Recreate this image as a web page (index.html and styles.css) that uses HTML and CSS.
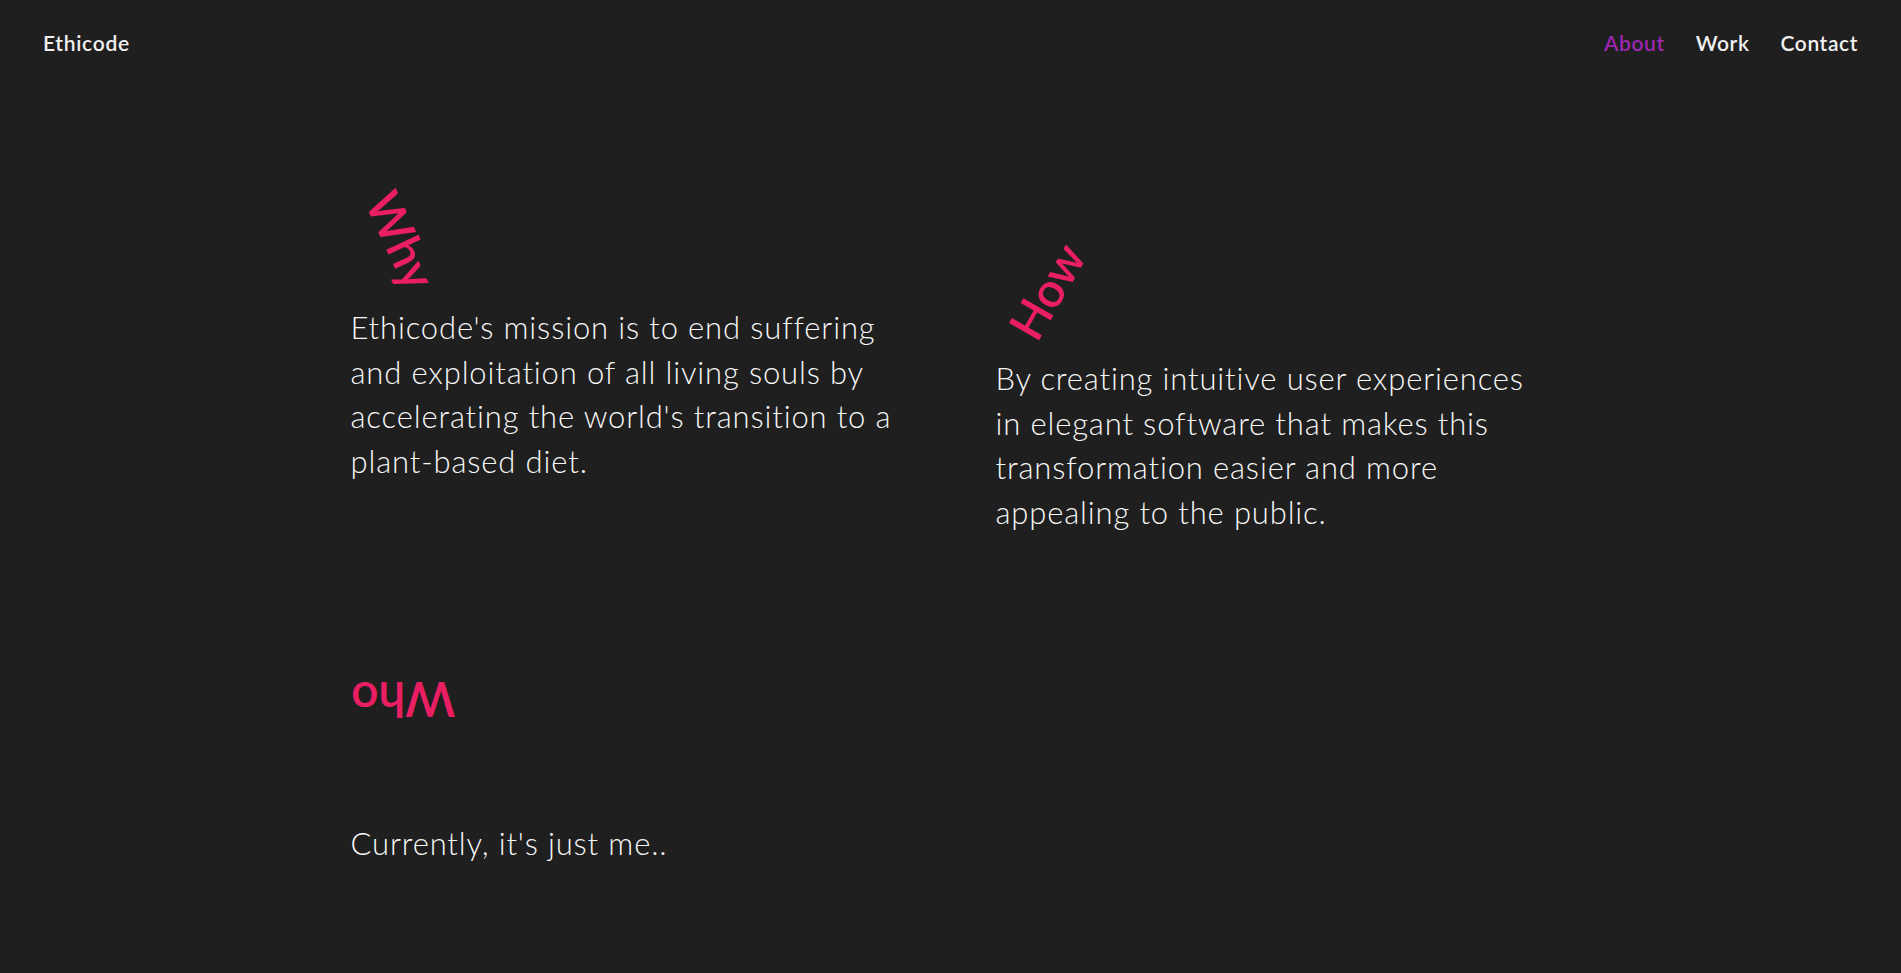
FILE: index.html
```html
<!DOCTYPE html>
<html lang="en">
<head>
<meta charset="utf-8">
<title>Ethicode — About</title>
<link rel="stylesheet" href="styles.css">
</head>
<body>
<header class="site-header">
  <a class="logo" href="#">Ethicode</a>
  <nav class="nav">
    <a class="nav-link active" href="#">About</a>
    <a class="nav-link" href="#">Work</a>
    <a class="nav-link" href="#">Contact</a>
  </nav>
</header>
<main class="content">
  <section class="row">
    <div class="col">
      <h2 class="tag tag-why">Why</h2>
      <p class="text">Ethicode's mission is to end suffering and exploitation of all living souls by accelerating the world's transition to a plant-based diet.</p>
    </div>
    <div class="col col-offset">
      <h2 class="tag tag-how">How</h2>
      <p class="text">By creating intuitive user experiences in elegant software that makes this transformation easier and more appealing to the public.</p>
    </div>
  </section>
  <section class="row row-who">
    <div class="col">
      <h2 class="tag tag-who">Who</h2>
      <p class="text text-who">Currently, it's just me..</p>
    </div>
  </section>
</main>
</body>
</html>
```
FILE: styles.css
```css
* { box-sizing: border-box; }
html, body {
  margin: 0;
  padding: 0;
  background: #1f1f1f;
  color: #f7f7f7;
  font-family: "Lato", "Noto Sans", sans-serif;
}
a { text-decoration: none; color: inherit; }

.site-header {
  display: flex;
  justify-content: space-between;
  align-items: center;
  height: 84px;
  padding: 0 43px 0 43px;
}
.logo {
  font-size: 21px;
  font-weight: 600;
  letter-spacing: 0.7px;
  color: #f0f0f0;
}
.nav {
  display: flex;
  gap: 31px;
}
.nav-link {
  font-size: 21px;
  font-weight: 600;
  letter-spacing: 0.6px;
  color: #f0f0f0;
}
.nav-link.active { color: #9c27b0; }

.content {
  max-width: 1200px;
  margin: 0 auto;
  padding-top: 120px;
}
.row {
  display: grid;
  grid-template-columns: 1fr 1fr;
  column-gap: 90px;
}
.col-offset { margin-top: 51px; }
.tag {
  display: inline-block;
  margin: 0;
  font-size: 48px;
  line-height: 72px;
  font-weight: 600;
  color: #e91e63;
}
.tag-why { transform: rotate(65deg); }
.tag-how { transform: rotate(-60deg); }
.tag-who { transform: rotate(180deg); }
.text {
  margin: 29px 0 0 0;
  font-size: 31px;
  line-height: 44.5px;
  font-weight: 300;
  letter-spacing: 0.85px;
}
.row-who { margin-top: 130px; }
.text-who { margin-top: 85px; }
```
